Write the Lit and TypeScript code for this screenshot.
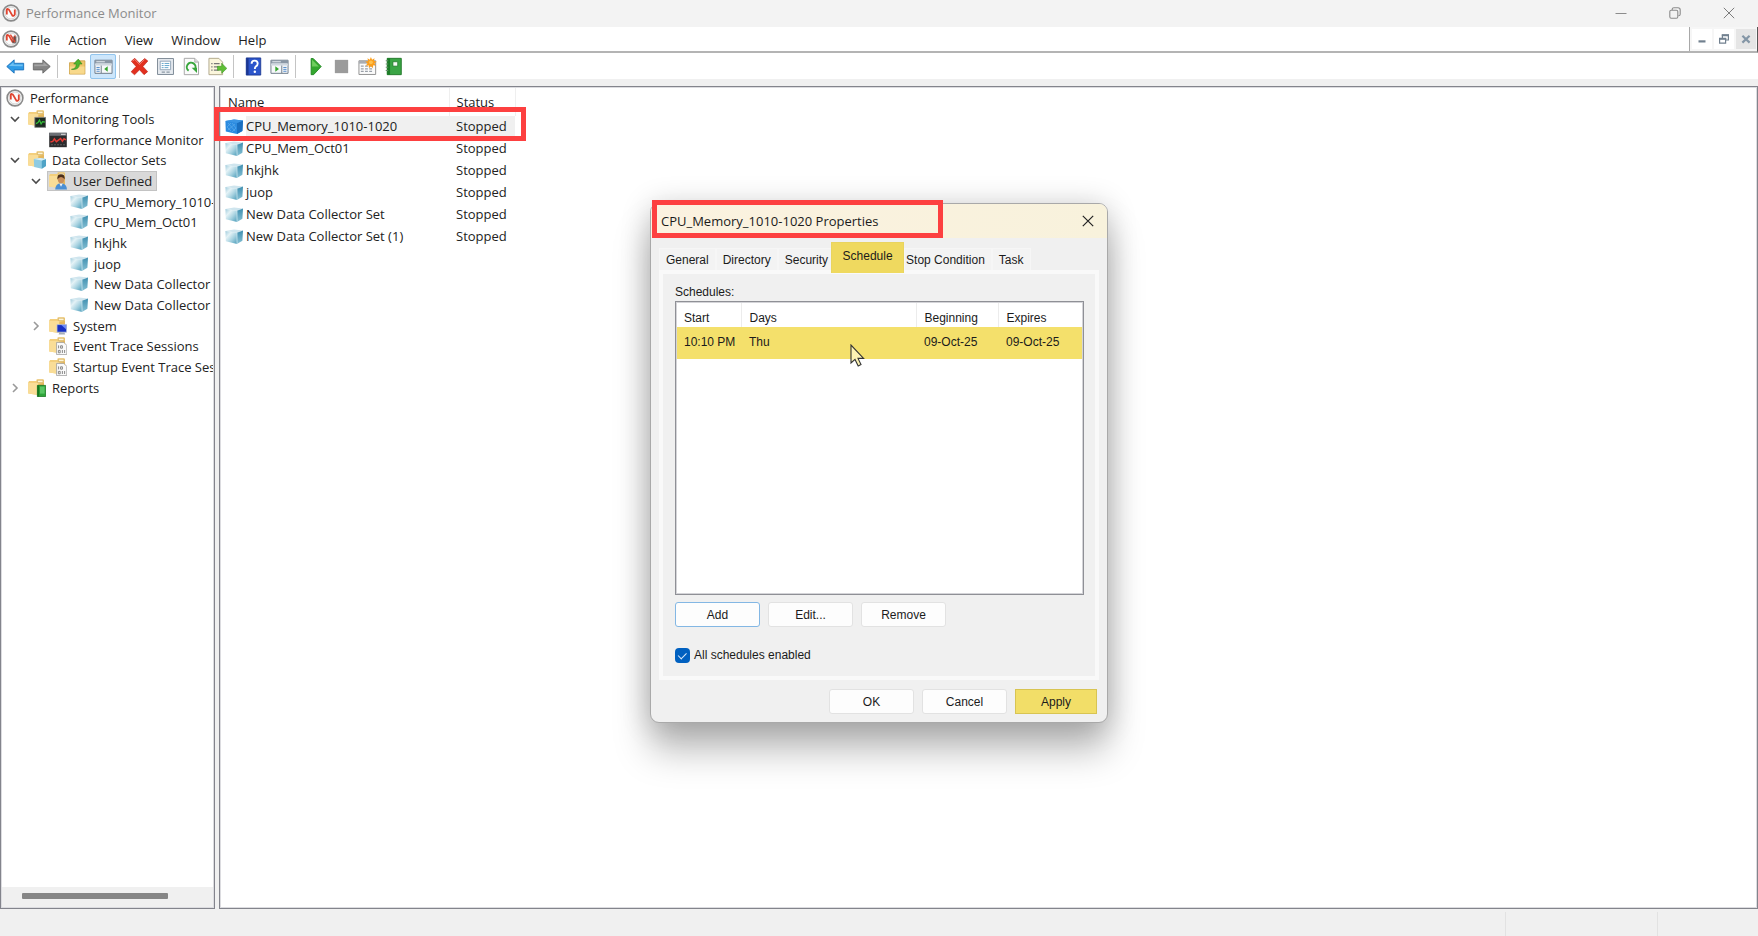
import { LitElement, html, css, svg, nothing, TemplateResult } from "lit";
import { customElement, property } from "lit/decorators.js";
import { classMap } from "lit/directives/class-map.js";

const perf = (doc = false) => html`<svg class="icon" viewBox="0 0 18 18" aria-hidden="true">
  <circle cx="9" cy="9" r="7.9" fill="#fbfbfb" stroke="#8a8a8a" stroke-width="1.6" />
  <circle cx="9" cy="9" r="6" fill="none" stroke="#c9c9c9" stroke-width="0.8" />
  <path d="M4.8 4.8 V10.6 M4.8 5 Q6.8 4.6 8 7.4 L10.4 11.6 Q12 12.4 12.8 10.4 V5.4" fill="none" stroke="#e0442f" stroke-width="1.8" />
  ${doc ? svg`<path d="M10.4 6.6h4v6.8h-4z" fill="#4a4a4a" opacity="0.7" /><path d="M8.4 4.6l4.6 7.6" stroke="#e0442f" stroke-width="1.4" />` : nothing}
</svg>`;

const cube = html`<svg class="icon" viewBox="0 0 18 18" aria-hidden="true">
  <defs>
    <linearGradient id="face" x1="0" y1="0" x2="1" y2="1">
      <stop offset="0" stop-color="#9fcbdc" /><stop offset="0.3" stop-color="#e4f2f6" /><stop offset="0.6" stop-color="#a9d3e1" /><stop offset="1" stop-color="#4c9dba" />
    </linearGradient>
    <linearGradient id="side" x1="0" y1="0" x2="0" y2="1">
      <stop offset="0" stop-color="#3f8fb0" /><stop offset="1" stop-color="#86c0d4" />
    </linearGradient>
  </defs>
  <path d="M0.4 3 L9 1.4 L18 2.4 L12 4.8Z" fill="#cfe5ee" />
  <path d="M0.4 3 L12 4.8 V16 L0.8 13.2Z" fill="url(#face)" />
  <path d="M12 4.8 L18 2.4 L17.4 12.8 L12 16Z" fill="url(#side)" />
  <path d="M12 4.8V16" stroke="#d9edf4" stroke-width="0.7" />
</svg>`;

const cubeActive = html`<svg class="icon" viewBox="0 0 18 18" aria-hidden="true">
  <path d="M0.4 3 L9 1.4 L18 2.4 L17.4 13 L12 16 L0.8 13.4Z" fill="#2b8be0" />
  <path d="M12 5 L18 2.4 L17.4 13 L12 16Z" fill="#1a6fc0" />
  <path d="M0.4 3 L9 1.4 L18 2.4 L12 5Z" fill="#3a95e4" />
  <path d="M3 5l7 8M7 5l4 5M2 9l4 4M10 6l-7 6M6 5l-4 4M11 10l-4 4" stroke="#5bacec" stroke-width="0.7" />
</svg>`;

const folderShape = svg`
  <path d="M0.2 3.2 L1.2 2 H8.4 V1 Q8.4 0.3 9.2 0.3 H15 Q16 0.3 16 1.3 V13.8 L10 16 L0.2 14.6Z" fill="#f3cf7c" />
  <path d="M9.4 1.2h5.6v2.4H9.4z" fill="#fdf4d6" stroke="#cda651" stroke-width="0.6" />
  <path d="M0.2 4 H9.6 L10.4 5 V16 L0.2 14.6Z" fill="#f9dd97" />
  <path d="M10.4 5 L16 3.8 V13.8 L10.4 16Z" fill="#e4b75e" />`;

const folder = (badge: TemplateResult) =>
  html`<svg class="icon" viewBox="0 0 18 18" aria-hidden="true">${folderShape}${badge}</svg>`;

const s = (t: any) => t as TemplateResult;

const monitorBadge = s(svg`<path d="M6.8 7.4h11v10H6.8z" fill="#1d2a22" stroke="#888" stroke-width="0.8" />
  <path d="M8 13.6l2-1 1.5-2.6 1.6 4 1.4-2.4 2.4 0.6" fill="none" stroke="#36c23a" stroke-width="1.2" />`);
const cubeBadge = s(svg`<path d="M5.8 8 L12.4 7 L18 8 V15 L13.8 17.8 L6.2 16Z" fill="#8ecbe2" />
  <path d="M13.8 9.6 L18 8 V15 L13.8 17.8Z" fill="#4fa3c6" /><path d="M5.8 8 L12.4 7 L18 8 L13.8 9.6Z" fill="#d8eef5" />`);
const userBadge = s(svg`<path d="M6.2 17.6 Q6.4 11.4 11.8 11.2 Q17.8 11.4 18 17.6Z" fill="#4a8fd4" />
  <path d="M10.4 11.6l1.6 3.2 1.8-3.2z" fill="#f4f4f4" /><ellipse cx="12" cy="7.2" rx="3.2" ry="4" fill="#c98f5b" />
  <path d="M8.4 7.6 Q7.8 2.2 12 2.2 Q16.2 2.2 15.6 7.6 Q14.6 5 12 5 Q9.6 5 8.4 7.6Z" fill="#4b2f1b" />`);
const systemBadge = s(svg`<path d="M8 7.6h9.6v7.6H8z" fill="#1730c4" stroke="#b9c3d6" stroke-width="0.8" />
  <path d="M12.4 8h4.8v4.6z" fill="#6d8bf5" /><path d="M10.4 15.6h5l0.8 1.8H9.6z" fill="#a7adb8" />`);
const traceBadge = s(svg`<path d="M7.6 5.4h7.2l3 3v9.2H7.6z" fill="#fafafa" stroke="#9a9a9a" stroke-width="0.8" />
  <path d="M9.6 8.4v3M11.6 8.8h1.8v2.4h-1.8zM9.4 13.4h1.8v2.4H9.4zM13.4 13v3M15.6 13v3" fill="none" stroke="#7d7d7d" stroke-width="0.9" />`);
const reportBadge = s(svg`<path d="M9.4 6.4h8.2v11.2H9.4z" fill="#2fa53a" stroke="#17741f" stroke-width="0.8" />
  <path d="M9.4 6.4h1.8v11.2H9.4z" fill="#17741f" /><path d="M12 7.6h4.6v7h-4.6z" fill="#58c663" />`);

const perfMonitor = html`<svg class="icon" viewBox="0 0 18 18" aria-hidden="true">
  <path d="M0.2 1.8h17.6v14.4H0.2z" fill="#2c2c2e" /><path d="M0.2 1.8h17.6v3H0.2z" fill="#6d7076" />
  <path d="M12 2.8h4.6v1H12z" fill="#e3e3e3" />
  <path d="M1.4 11l2.4-0.6 1.6-2.6 2 2.8 2-1.4 2.2-1.6 1.8 2.6 1.6-2.4 2 1" fill="none" stroke="#e33b35" stroke-width="1.5" />
  <path d="M2 13.8h14" stroke="#777" stroke-width="0.7" stroke-dasharray="2 1" />
</svg>`;

const tool = (body: TemplateResult) => html`<svg class="tool-icon" viewBox="0 0 20 20" aria-hidden="true">${body}</svg>`;

const toolIcons = {
  back: tool(s(svg`<path d="M0.8 10 L8.6 3 V6.6 H18.6 V13.6 H8.6 V17Z" fill="#2f9be6" stroke="#1a6fb8" stroke-width="0.9" /><path d="M3 9.6 L8 5.4 V7.8 H17.6 V9.8Z" fill="#71c1f3" />`)),
  forward: tool(s(svg`<path d="M19.2 10 L11.4 3 V6.6 H1.4 V13.6 H11.4 V17Z" fill="#858585" stroke="#666" stroke-width="0.9" /><path d="M17 9.6 L12 5.4 V7.8 H2.4 V9.8Z" fill="#a5a5a5" />`)),
  up: tool(s(svg`<path d="M1.6 6h6l1.6-2h8.6v14H1.6z" fill="#eec66b" stroke="#c99a3c" stroke-width="0.8" /><path d="M2 10h15.4v7.6H2z" fill="#f8d98c" /><path d="M3.6 13 Q9 12.4 8.6 7.4 H6 L10.8 2.2 L14.8 7.4 H12 Q12 14 3.6 13Z" fill="#4fb52e" stroke="#2f861a" stroke-width="0.6" />`)),
  treePane: tool(s(svg`<path d="M1 3.4h18v13.8H1z" fill="#f6f8fa" stroke="#6c7987" stroke-width="1" /><path d="M1 3.4h18v3.4H1z" fill="#8a97a5" /><path d="M2.4 5h9" stroke="#e8edf2" stroke-width="1" /><path d="M1 7h18v2H1z" fill="#cfd7df" /><path d="M7.6 9v8" stroke="#6c7987" /><path d="M2.6 11h3.4M2.6 13h3.4M2.6 15h3.4" stroke="#4a86c8" /><path d="M14.4 9.8v5.6l-3.6-2.8z" fill="#35a52c" />`)),
  remove: tool(s(svg`<path d="M1.4 4.4 L5 1.4 L10 6.6 L15.4 1.6 L18.8 4.2 L13.6 10 L18.6 15.4 L14.8 18.6 L10 13.4 L4.8 18.8 L1.2 15.6 L6.4 10Z" fill="#e2301f" stroke="#b81d12" stroke-width="0.6" /><path d="M2.6 4.4 L5 2.6 L10 7.8 L15.2 2.8" fill="none" stroke="#f58a7a" stroke-width="0.9" />`)),
  properties: tool(s(svg`<path d="M1.6 1.6h16.8v16.8H1.6z" fill="#e6eaef" stroke="#7b8794" stroke-width="1" /><path d="M4.4 4.4h11v9h-11z" fill="#fff" stroke="#8fa3b5" stroke-width="1" /><path d="M6 6.8h2M9 6.8h5M6 9h2M9 9h5M6 11.2h2M9 11.2h4" stroke="#4d9ac4" stroke-width="0.9" /><path d="M6 16h3.4M11 16h3.4" stroke="#8b98a5" stroke-width="1.3" />`)),
  refresh: tool(s(svg`<path d="M2.4 1.4h11l4 4v13.2h-15z" fill="#fbfbfb" stroke="#9b9b9b" stroke-width="0.9" /><path d="M13.4 1.4v4h4" fill="#ddd" stroke="#9b9b9b" stroke-width="0.7" /><path d="M7 14.4 A4.6 4.6 0 1 1 13.6 13" fill="none" stroke="#38a63c" stroke-width="2.1" /><path d="M10.2 11.4h5.6v5.4z" fill="#38a63c" />`)),
  exportList: tool(s(svg`<path d="M1 1.4h10.4l4 4v13.2H1z" fill="#fbf6dc" stroke="#a89f80" stroke-width="0.9" /><path d="M3.4 7h1.4M6.2 7h6M3.4 10.4h1.4M6.2 10.4h5M3.4 13.8h1.4M6.2 13.8h5" stroke="#777" stroke-width="1.2" /><path d="M10 9.8h4.4V6.6l5.4 5.4-5.4 5.2V14H10z" fill="#5fbf35" stroke="#3b9220" stroke-width="0.6" />`)),
  help: tool(s(svg`<path d="M2.4 1h15.2v18H2.4z" fill="#2c55cb" stroke="#1b3791" stroke-width="0.9" /><path d="M2.4 1h2.4v18H2.4z" fill="#1b3791" /><path d="M8 7 Q8 3.8 11.2 3.8 Q14.4 3.8 14.4 6.8 Q14.4 8.8 12.6 9.8 Q11.4 10.6 11.4 12.6" fill="none" stroke="#fff" stroke-width="2" /><circle cx="11.4" cy="15.6" r="1.3" fill="#fff" />`)),
  actionPane: tool(s(svg`<path d="M1 3.4h18v13.8H1z" fill="#f6f8fa" stroke="#6c7987" stroke-width="1" /><path d="M1 3.4h18v3.4H1z" fill="#8a97a5" /><path d="M2.4 5h9" stroke="#e8edf2" stroke-width="1" /><path d="M1 7h18v2H1z" fill="#cfd7df" /><path d="M12.4 9v8" stroke="#6c7987" /><path d="M14 11h3.4M14 13h3.4M14 15h3.4" stroke="#4a86c8" /><path d="M5.6 9.8v5.6l3.8-2.8z" fill="#35a52c" />`)),
  play: tool(s(svg`<path d="M5.4 1.6 H7.6 L16 10 L8 18.6 H5.4Z" fill="#33a72e" stroke="#1f8420" stroke-width="0.9" /><path d="M6.4 3 L13.6 10 L6.4 10Z" fill="#6fce5f" />`)),
  stop: tool(s(svg`<path d="M3 3h14v14H3z" fill="#9b9b9b" />`)),
  newSet: tool(s(svg`<path d="M1 4h17.6v14.4H1z" fill="#fafafa" stroke="#8f8f8f" stroke-width="1" /><path d="M1 4h17.6v3H1z" fill="#a9adb3" /><path d="M3 9.6h3M7.4 9.6h3M11.8 9.6h3M3 12.4h3M7.4 12.4h3M11.8 12.4h3M3 15.2h3M7.4 15.2h3M11.8 15.2h3" stroke="#9aa0a8" stroke-width="1.3" /><path d="M13.6 0l1.2 2.8 2.6-1.6-0.6 3 3 0.8-2.6 1.6 1.8 2.6-3-0.4-0.4 3-2-2.2-2 2.2-0.4-3-3 0.4 1.8-2.6-2.4-1.6 3-0.8-0.6-3 2.4 1.6z" fill="#fb9e1c" /><circle cx="13.6" cy="5.6" r="2" fill="#ffc14d" />`)),
  report: tool(s(svg`<path d="M3.4 1.4h14.8v17.2H3.4z" fill="#3aa545" stroke="#16701f" stroke-width="0.9" /><path d="M3.4 1.4h3v17.2h-3z" fill="#1c7d28" /><path d="M1.8 4h2.6M1.8 7.4h2.6M1.8 10.8h2.6M1.8 14.2h2.6" stroke="#6b8f6e" stroke-width="1.2" /><path d="M9.4 5h5v4.6h-5z" fill="#f6fbf6" stroke="#16701f" stroke-width="0.7" />`)),
};

interface TreeNode {
  label: string;
  level: number;
  icon: TemplateResult;
  open?: boolean;
  selected?: boolean;
}

const TREE: TreeNode[] = [
  { label: "Performance", level: 0, icon: perf() },
  { label: "Monitoring Tools", level: 1, icon: folder(monitorBadge), open: true },
  { label: "Performance Monitor", level: 2, icon: perfMonitor },
  { label: "Data Collector Sets", level: 1, icon: folder(cubeBadge), open: true },
  { label: "User Defined", level: 2, icon: folder(userBadge), open: true, selected: true },
  { label: "CPU_Memory_1010-", level: 3, icon: cube },
  { label: "CPU_Mem_Oct01", level: 3, icon: cube },
  { label: "hkjhk", level: 3, icon: cube },
  { label: "juop", level: 3, icon: cube },
  { label: "New Data Collector", level: 3, icon: cube },
  { label: "New Data Collector", level: 3, icon: cube },
  { label: "System", level: 2, icon: folder(systemBadge), open: false },
  { label: "Event Trace Sessions", level: 2, icon: folder(traceBadge) },
  { label: "Startup Event Trace Sess", level: 2, icon: folder(traceBadge) },
  { label: "Reports", level: 1, icon: folder(reportBadge), open: false },
];

const SETS = ["CPU_Memory_1010-1020", "CPU_Mem_Oct01", "hkjhk", "juop", "New Data Collector Set", "New Data Collector Set (1)"];

const shared = css`
  * { box-sizing: border-box; }
  button { font: inherit; color: inherit; border: 0; background: none; padding: 0; margin: 0; }
  .icon { width: 18px; height: 18px; flex: none; display: block; }
`;

@customElement("console-tree")
export class ConsoleTree extends LitElement {
  static styles = [shared, css`
    :host { display: flex; flex-direction: column; flex: 1; min-height: 0; }
    .tree { list-style: none; margin: 0; padding: 0; height: 310px; display: grid; grid-auto-rows: 1fr; }
    .node { display: flex; align-items: center; min-width: 0; overflow: hidden; }
    .level-0 { padding-left: 2px; }
    .level-1 { padding-left: 6px; }
    .level-2 { padding-left: 27px; }
    .level-3 { padding-left: 48px; }
    .twisty { width: 14px; margin-right: 4px; flex: none; display: flex; justify-content: center; }
    .twisty svg { width: 12px; height: 12px; }
    .item { display: flex; align-items: center; gap: 6px; min-width: 0; height: 20px; padding-left: 2px; white-space: nowrap; text-align: left; }
    .item.selected { background: #d9d9d9; outline: 1px solid #c3c3c3; outline-offset: -1px; padding-right: 5px; }
    .label { line-height: 20px; }
    .scroll { margin-top: auto; height: 20px; background: #f0f0f0; padding: 6px 45px 7px 20px; }
    .thumb { height: 6px; background: #868686; border-radius: 1px; }
  `];

  private twisty(n: TreeNode) {
    if (n.level === 0) return nothing;
    return html`<span class="twisty">${n.open === undefined ? nothing : html`<svg viewBox="0 0 12 12" aria-hidden="true">
      <path d=${n.open ? "M2 4l4 4 4-4" : "M4 2l4 4-4 4"} fill="none" stroke=${n.open ? "#4a4a4a" : "#9a9a9a"} stroke-width="1.6" /></svg>`}</span>`;
  }

  render() {
    return html`<ul class="tree" role="tree" aria-label="Console tree">
      ${TREE.map((n) => html`<li class="node level-${n.level}" role="treeitem" aria-selected=${n.selected ? "true" : "false"}>
        ${this.twisty(n)}<button class=${classMap({ item: true, selected: !!n.selected })}>${n.icon}<span class="label">${n.label}</span></button>
      </li>`)}
    </ul>
    <div class="scroll"><div class="thumb"></div></div>`;
  }
}

@customElement("properties-dialog")
export class PropertiesDialog extends LitElement {
  @property() heading = "";

  static styles = [shared, css`
    :host { display: flex; flex-direction: column; background: #f0f0f0; border: 1px solid #a9a9a9; border-radius: 9px;
      font: 12px/16px "Liberation Sans", Arial, sans-serif; color: #1b1b1b; padding-bottom: 8px;
      box-shadow: 0 28px 36px rgba(0, 0, 0, 0.26), 0 2px 30px rgba(0, 0, 0, 0.2); }
    .title { display: flex; align-items: center; height: 34px; padding: 0 10px; border-radius: 8px 8px 0 0;
      background: linear-gradient(90deg, #fbf2e0, #f8f2dc); font: 13px/18px "Open Sans", "Noto Sans", sans-serif; }
    .title h2 { flex: 1; margin: 0; font: inherit; }
    .close { width: 18px; height: 18px; display: grid; place-items: center; }
    .close svg { width: 12px; height: 12px; }
    .tabs { display: flex; align-items: flex-end; height: 32px; padding: 0 9px 0 8px; }
    .tab { height: 22px; background: #f3f3f3; border: 1px solid #f6f6f6; border-bottom: 0; padding: 0 6px; white-space: nowrap; }
    .tab.active { height: 31px; background: #efd95f; border-color: #e9d45f; position: relative; top: 3px; margin-left: -4px; padding: 0 8px 4px; width: 73px; }
    .tab.stop { padding: 0 6px 0 1px; }
    .panel { margin: 0 8px; border: 4px solid #f9f9f9; padding: 9px 11px 13px 12px; }
    .caption { margin: 0; line-height: 18px; }
    .list { border: 1px solid #8f9096; outline: 1px solid #d4d4d8; outline-offset: -2px; background: #fff; height: 294px; padding: 1px 1px 0 0; }
    table { width: 100%; border-collapse: collapse; table-layout: fixed; }
    th, td { text-align: left; font-weight: 400; padding: 0 0 0 8px; white-space: nowrap; }
    th { height: 24px; padding-top: 5px; border-right: 1px solid #ececec; }
    th:last-child { border-right: 0; }
    td { height: 32px; background: #f4e06b; padding-bottom: 3px; }
    .c-start { width: 65px; } .c-days { width: 175px; } .c-begin { width: 82px; }
    .row { display: flex; gap: 8px; margin-top: 7px; }
    .push { width: 85px; height: 25px; background: #fdfdfd; border: 1px solid #e2e2e2; border-radius: 3px; }
    .push.default { border-color: #83b7e4; }
    .push.apply { width: 82px; background: #f2de68; border-color: #d8c452; border-radius: 0; }
    .check { display: flex; align-items: center; gap: 4px; margin-top: 20px; width: max-content; }
    .check input { appearance: none; width: 15px; height: 15px; margin: 0; border-radius: 4px; background: #0060c0; display: grid; place-items: center; }
    .check input::before { content: ""; width: 7px; height: 4px; border: solid #d9eafa; border-width: 0 0 1px 1px; transform: rotate(-45deg) translate(0, -1px); }
    .footer { display: flex; justify-content: flex-end; gap: 8px; margin: 9px 10px 0; }
  `];

  render() {
    return html`
      <header class="title"><h2>${this.heading}</h2>
        <button class="close" aria-label="Close"><svg viewBox="0 0 12 12"><path d="M0.8 0.8l10.4 10.4M11.2 0.8L0.8 11.2" stroke="#222" stroke-width="1.2" /></svg></button>
      </header>
      <div class="tabs" role="tablist">
        <button class="tab" role="tab">General</button>
        <button class="tab" role="tab">Directory</button>
        <button class="tab" role="tab">Security</button>
        <button class="tab active" role="tab" aria-selected="true">Schedule</button>
        <button class="tab stop" role="tab">Stop Condition</button>
        <button class="tab" role="tab">Task</button>
      </div>
      <section class="panel">
        <p class="caption" id="cap">Schedules:</p>
        <div class="list">
          <table aria-labelledby="cap">
            <thead><tr><th class="c-start">Start</th><th class="c-days">Days</th><th class="c-begin">Beginning</th><th>Expires</th></tr></thead>
            <tbody><tr><td>10:10 PM</td><td>Thu</td><td>09-Oct-25</td><td>09-Oct-25</td></tr></tbody>
          </table>
        </div>
        <div class="row">
          <button class="push default">Add</button><button class="push">Edit...</button><button class="push">Remove</button>
        </div>
        <label class="check" for="enabled"><input id="enabled" type="checkbox" checked />All schedules enabled</label>
      </section>
      <div class="footer">
        <button class="push">OK</button><button class="push">Cancel</button><button class="push apply">Apply</button>
      </div>`;
  }
}

@customElement("app-root")
export class AppRoot extends LitElement {
  static styles = [shared, css`
    :host { display: flex; flex-direction: column; height: 100vh; position: relative; overflow: hidden; background: #f0f0f0;
      font: 13px/18px "Open Sans", "Noto Sans", sans-serif; color: #222; border-bottom: 2px solid #1c181c; }
    .titlebar { display: flex; align-items: center; height: 27px; background: #f3f3f3; color: #8c8c8c; padding: 0 2px 2px; gap: 6px; flex: none; }
    .titlebar h1 { flex: 1; margin: 0; font: inherit; }
    .caption-buttons { display: flex; }
    .caption-buttons button { width: 54px; height: 25px; display: grid; place-items: center; }
    .caption-buttons svg { width: 12px; height: 12px; }
    .menubar { display: flex; align-items: stretch; height: 26px; background: #fff; border-bottom: 2px solid #b4b4b4; flex: none; padding-left: 2px; border-right: 1px solid #555; }
    .menubar .icon { align-self: center; }
    nav { display: flex; flex: 1; border-right: 1px solid #a8a8a8; padding: 1px 0 0 1px; }
    nav button { padding: 0 9px; }
    .mdi { display: flex; align-items: center; gap: 2px; padding: 0 1px 0 2px; background: #f6f6f6; }
    .mdi button { width: 20px; height: 20px; background: #fff; display: grid; place-items: center; }
    .mdi .mdi-close { background: #e5e5e5; }
    .mdi svg { width: 12px; height: 12px; }
    .toolbar { display: flex; align-items: center; height: 26px; background: #fff; padding-left: 2px; flex: none; }
    .toolbar button { width: 26px; height: 25px; display: grid; place-items: center; }
    .toolbar button.on { background: #cde6fb; outline: 1px solid #92c5ee; outline-offset: -1px; border-radius: 2px; }
    .tool-icon { width: 19px; height: 19px; display: block; }
    .sep { width: 1px; height: 23px; background: #c4c4c4; margin: 0 6px 0 3px; }
    .main { flex: 1; display: flex; gap: 4px; padding-top: 7px; min-height: 0; }
    .pane { background: #fff; border: 1px solid #83848c; display: flex; flex-direction: column; min-width: 0; box-shadow: inset 0 0 0 1px #dcdce0; }
    .tree-pane { width: 215px; flex: none; padding: 1px; }
    .list-pane { flex: 1; padding: 1px 5px; }
    table { border-collapse: collapse; table-layout: fixed; width: 290px; }
    th, td { text-align: left; font-weight: 400; padding: 0 0 0 7px; white-space: nowrap; }
    th { height: 28px; border-right: 1px solid #efefef; }
    th:first-child { padding-left: 3px; }
    td { height: 22px; }
    td:first-child { padding-left: 0; }
    .c-name { width: 224px; }
    .c-status { width: 66px; }
    .set { display: flex; align-items: center; gap: 3px; height: 22px; width: 100%; text-align: left; }
    .set span { flex: 1; line-height: 20px; height: 22px; }
    .state { padding-bottom: 2px; }
    .picked .set span, .picked .state { background: #f0f0f0; }
    .status { display: flex; justify-content: flex-end; height: 27px; flex: none; padding-top: 3px; }
    .status div { border-left: 1px solid #e2e2e2; width: 152px; }
    .status div:last-child { width: 101px; }
    .dialog { position: absolute; top: 203px; left: 0; right: 0; margin: 0 auto; width: 458px; }
    .mark { position: absolute; border: 5px solid #fd4040; pointer-events: none; }
    .mark-row { left: 214px; top: 107px; width: 312px; height: 34px; }
    .mark-title { left: 50%; margin-left: -227px; top: 200px; width: 291px; height: 38px; }
    .pointer { position: absolute; left: 50%; margin-left: -29px; top: 344px; width: 16px; height: 24px; }
  `];

  private tb(icon: keyof typeof toolIcons, label: string, on = false) {
    return html`<button class=${classMap({ on })} aria-label=${label}>${toolIcons[icon]}</button>`;
  }

  render() {
    return html`
      <header class="titlebar">${perf()}<h1>Performance Monitor</h1>
        <div class="caption-buttons">
          <button aria-label="Minimize"><svg viewBox="0 0 12 12"><path d="M0.5 6.5h11" stroke="#8c8c8c" /></svg></button>
          <button aria-label="Restore"><svg viewBox="0 0 12 12"><rect x="0.8" y="3.2" width="8" height="8" rx="1.4" fill="none" stroke="#8c8c8c" stroke-width="1.1" /><path d="M3.2 3V2.2Q3.4 0.8 4.8 0.8H9Q11.2 0.8 11.2 3V7.2Q11.2 8.6 9.4 8.8" fill="none" stroke="#8c8c8c" stroke-width="1.1" /></svg></button>
          <button aria-label="Close"><svg viewBox="0 0 12 12"><path d="M0.8 0.8l10.4 10.4M11.2 0.8L0.8 11.2" stroke="#7c7c7c" /></svg></button>
        </div>
      </header>
      <div class="menubar">${perf(true)}
        <nav>${["File", "Action", "View", "Window", "Help"].map((m) => html`<button>${m}</button>`)}</nav>
        <div class="mdi">
          <button aria-label="Minimize child"><svg viewBox="0 0 12 12"><path d="M2.5 8.4h7" stroke="#71808f" stroke-width="2.2" /></svg></button>
          <button aria-label="Restore child"><svg viewBox="0 0 12 12"><path d="M1.6 5.6h6v4.6h-6zM4.4 5V2.2h6V7H8" fill="none" stroke="#71808f" stroke-width="1.2" /><path d="M1 5.8h7.2M3.8 2.2h7.2" stroke="#71808f" stroke-width="2" /></svg></button>
          <button class="mdi-close" aria-label="Close child"><svg viewBox="0 0 12 12"><path d="M2.4 2.8l7.2 6.8M9.6 2.8L2.4 9.6" stroke="#8496a6" stroke-width="2.2" /></svg></button>
        </div>
      </div>
      <div class="toolbar" role="toolbar">
        ${this.tb("back", "Back")}${this.tb("forward", "Forward")}<span class="sep"></span>
        ${this.tb("up", "Up one level")}${this.tb("treePane", "Show console tree", true)}<span class="sep"></span>
        ${this.tb("remove", "Delete")}${this.tb("properties", "Properties")}${this.tb("refresh", "Refresh")}${this.tb("exportList", "Export list")}<span class="sep"></span>
        ${this.tb("help", "Help")}${this.tb("actionPane", "Show action pane")}<span class="sep"></span>
        ${this.tb("play", "Start")}${this.tb("stop", "Stop")}${this.tb("newSet", "New data collector set")}${this.tb("report", "Latest report")}
      </div>
      <main class="main">
        <section class="pane tree-pane"><console-tree></console-tree></section>
        <section class="pane list-pane">
          <table>
            <thead><tr><th class="c-name">Name</th><th class="c-status">Status</th></tr></thead>
            <tbody>${SETS.map((name, i) => html`<tr class=${classMap({ picked: i === 0 })}>
              <td><button class="set">${i === 0 ? cubeActive : cube}<span>${name}</span></button></td>
              <td class="state">Stopped</td></tr>`)}</tbody>
          </table>
        </section>
      </main>
      <footer class="status"><div></div><div></div></footer>
      <properties-dialog class="dialog" heading="CPU_Memory_1010-1020 Properties"></properties-dialog>
      <div class="mark mark-row"></div>
      <div class="mark mark-title"></div>
      <svg class="pointer" viewBox="0 0 16 24" aria-hidden="true"><path d="M1 1 V19 L5 15.4 L8.2 22 L11 20.6 L8 14.4 H13.6Z" fill="#fdf3b4" stroke="#333" stroke-width="1.1" /></svg>`;
  }
}
